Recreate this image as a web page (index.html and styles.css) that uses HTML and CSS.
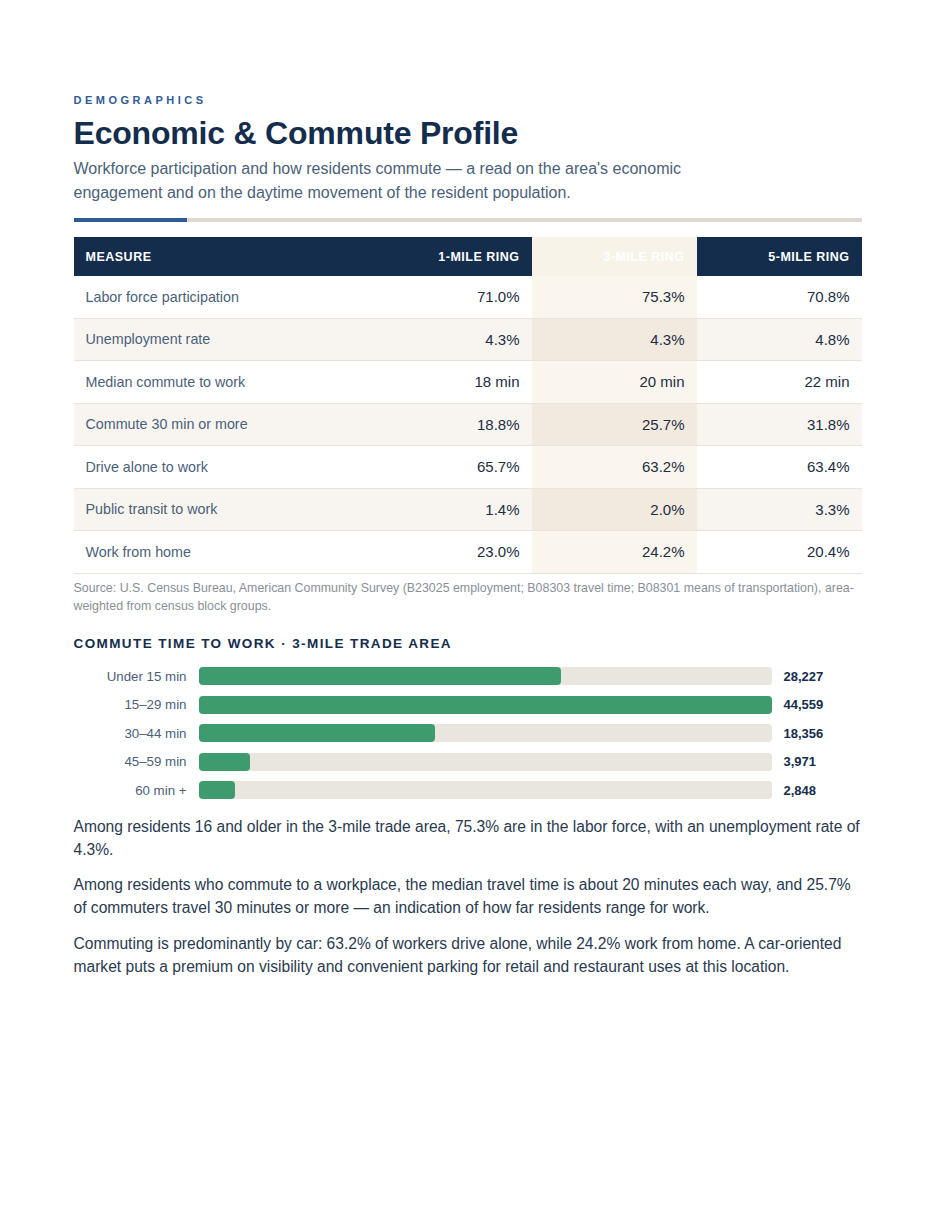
FILE: index.html
```html
<!DOCTYPE html>
<html lang="en">
<head>
  <meta charset="UTF-8" />
  <title>Economic &amp; Commute Profile</title>
  <link rel="stylesheet" href="styles.css">
</head>
<body>
  <div class="page">
    <div class="eyebrow">Demographics</div>
    <h1 class="title">Economic &amp; Commute Profile</h1>
    <p class="lede">Workforce participation and how residents commute — a read on the area's economic engagement and on the daytime movement of the resident population.</p>
    <div class="rule"><span></span></div>

    <table class="stats">
      <thead>
        <tr>
          <th class="measure">Measure</th>
          <th>1-Mile Ring</th>
          <th class="hl">3-Mile Ring</th>
          <th>5-Mile Ring</th>
        </tr>
      </thead>
      <tbody>
        <tr><td class="measure">Labor force participation</td><td>71.0%</td><td class="hl">75.3%</td><td>70.8%</td></tr>
        <tr><td class="measure">Unemployment rate</td><td>4.3%</td><td class="hl">4.3%</td><td>4.8%</td></tr>
        <tr><td class="measure">Median commute to work</td><td>18 min</td><td class="hl">20 min</td><td>22 min</td></tr>
        <tr><td class="measure">Commute 30 min or more</td><td>18.8%</td><td class="hl">25.7%</td><td>31.8%</td></tr>
        <tr><td class="measure">Drive alone to work</td><td>65.7%</td><td class="hl">63.2%</td><td>63.4%</td></tr>
        <tr><td class="measure">Public transit to work</td><td>1.4%</td><td class="hl">2.0%</td><td>3.3%</td></tr>
        <tr><td class="measure">Work from home</td><td>23.0%</td><td class="hl">24.2%</td><td>20.4%</td></tr>
      </tbody>
    </table>
    <p class="source">Source: U.S. Census Bureau, American Community Survey (B23025 employment; B08303 travel time; B08301 means of transportation), area-weighted from census block groups.</p>

    <h2 class="chart-title">Commute Time to Work · 3-Mile Trade Area</h2>
    <div class="chart">
      <div class="bar-row">
        <span class="bar-label">Under 15 min</span>
        <div class="track"><div class="fill" style="width: 63.35%"></div></div>
        <span class="bar-value">28,227</span>
      </div>
      <div class="bar-row">
        <span class="bar-label">15–29 min</span>
        <div class="track"><div class="fill" style="width: 100%"></div></div>
        <span class="bar-value">44,559</span>
      </div>
      <div class="bar-row">
        <span class="bar-label">30–44 min</span>
        <div class="track"><div class="fill" style="width: 41.2%"></div></div>
        <span class="bar-value">18,356</span>
      </div>
      <div class="bar-row">
        <span class="bar-label">45–59 min</span>
        <div class="track"><div class="fill" style="width: 8.91%"></div></div>
        <span class="bar-value">3,971</span>
      </div>
      <div class="bar-row">
        <span class="bar-label">60 min +</span>
        <div class="track"><div class="fill" style="width: 6.39%"></div></div>
        <span class="bar-value">2,848</span>
      </div>
    </div>

    <div class="notes">
      <p>Among residents 16 and older in the 3-mile trade area, 75.3% are in the labor force, with an unemployment rate of 4.3%.</p>
      <p>Among residents who commute to a workplace, the median travel time is about 20 minutes each way, and 25.7% of commuters travel 30 minutes or more — an indication of how far residents range for work.</p>
      <p>Commuting is predominantly by car: 63.2% of workers drive alone, while 24.2% work from home. A car-oriented market puts a premium on visibility and convenient parking for retail and restaurant uses at this location.</p>
    </div>
  </div>
</body>
</html>
```

FILE: styles.css
```css
body {
  margin: 0;
  background: #fff;
  font-family: 'Liberation Sans', Arial, sans-serif;
  color: #1d2d44;
}

.page {
  width: 788px;
  margin: 0 auto;
  padding-top: 94px;
}

.eyebrow {
  font-size: 11px;
  font-weight: bold;
  letter-spacing: 3.5px;
  text-transform: uppercase;
  color: #2f5b94;
  line-height: 13px;
}

.title {
  margin: 7px 0 0;
  font-size: 32px;
  line-height: 38px;
  font-weight: bold;
  color: #142d4c;
  letter-spacing: -0.2px;
}

.lede {
  margin: 5px 0 0;
  max-width: 640px;
  font-size: 16px;
  line-height: 24px;
  color: #4b5f79;
}

.rule {
  margin-top: 13px;
  height: 4px;
  background: #dcd9d1;
}

.rule span {
  display: block;
  width: 113px;
  height: 4px;
  background: #2f5b94;
}

.stats {
  width: 100%;
  margin-top: 15px;
  border-collapse: collapse;
  font-size: 15px;
}

.stats th {
  height: 39px;
  padding: 0 12px;
  background: #142d4c;
  color: #fff;
  font-size: 12.5px;
  font-weight: bold;
  text-transform: uppercase;
  letter-spacing: 0.5px;
  text-align: right;
  width: 141px;
}

.stats th.measure {
  text-align: left;
  width: auto;
}

.stats th.hl {
  background: #f8f3e8;
  color: #fff;
}

.stats td {
  height: 41.5px;
  padding: 0 12px;
  text-align: right;
  color: #1d2d44;
  border-bottom: 1px solid #e8e4dc;
}

.stats td.measure {
  text-align: left;
  font-size: 14.3px;
  color: #4b5f79;
}

.stats td.hl {
  background: #faf6ed;
}

.stats tbody tr:nth-child(even) td {
  background: #f8f5f0;
}

.stats tbody tr:nth-child(even) td.hl {
  background: #f3eadf;
}

.source {
  margin: 5px 0 0;
  font-size: 12.4px;
  line-height: 18px;
  color: #8a8f97;
}

.chart-title {
  margin: 21px 0 0;
  font-size: 13.5px;
  line-height: 16px;
  font-weight: bold;
  text-transform: uppercase;
  letter-spacing: 1.4px;
  color: #142d4c;
}

.chart {
  margin-top: 15px;
  display: flex;
  flex-direction: column;
  gap: 9.5px;
}

.bar-row {
  display: flex;
  align-items: center;
  height: 19px;
}

.bar-label {
  width: 113px;
  text-align: right;
  font-size: 13.3px;
  color: #4b5f79;
  margin-right: 12px;
}

.track {
  flex: 1;
  height: 18px;
  background: #e9e6df;
  border-radius: 4px;
}

.fill {
  height: 100%;
  background: #3d9b6e;
  border-radius: 4px;
}

.bar-value {
  width: 78px;
  margin-left: 12px;
  font-size: 13px;
  font-weight: bold;
  color: #142d4c;
}

.notes {
  margin-top: 15px;
}

.notes p {
  margin: 0 0 12.5px;
  font-size: 15.6px;
  line-height: 23px;
  color: #2a3a50;
}
```
